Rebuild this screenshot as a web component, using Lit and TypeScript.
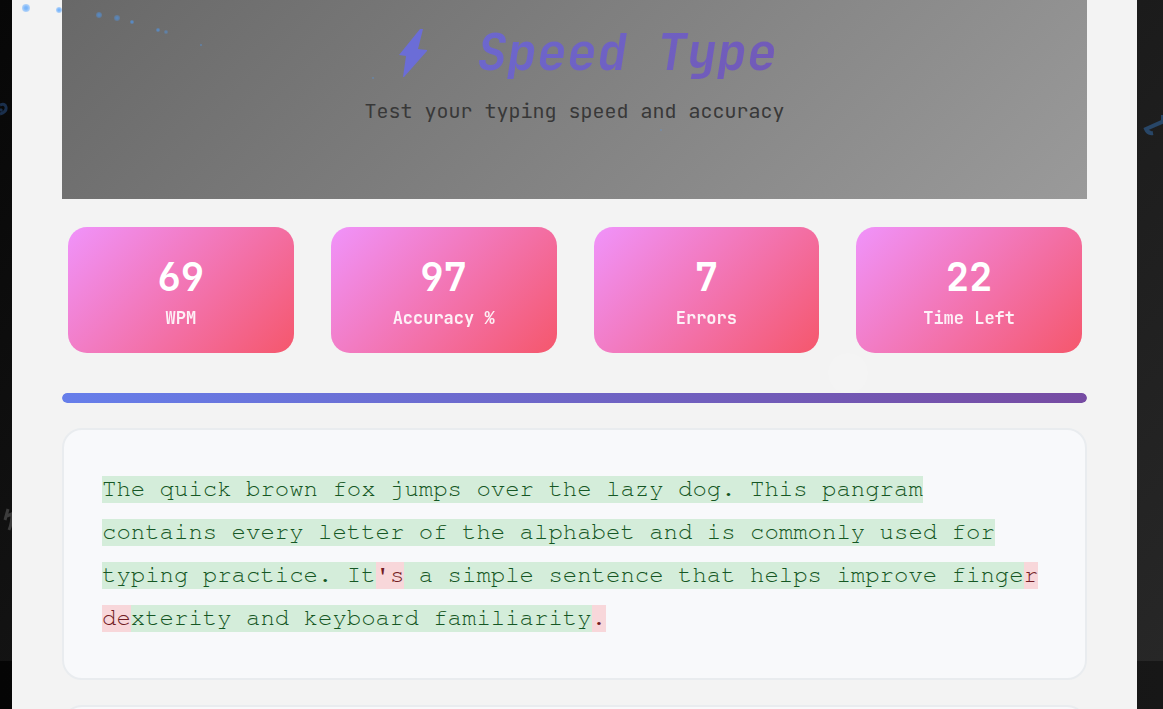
import { LitElement, html, css, svg } from "lit";
import { customElement } from "lit/decorators.js";

const STATS = [
  { value: "69", label: "WPM" },
  { value: "97", label: "Accuracy %" },
  { value: "7", label: "Errors" },
  { value: "22", label: "Time Left" },
];

const RUNS: Array<[boolean, string]> = [
  [true, "The quick brown fox jumps over the lazy dog. This pangram contains every letter of the alphabet and is commonly used for typing practice. It"],
  [false, "'s"],
  [true, " a simple sentence that helps improve finge"],
  [false, "r de"],
  [true, "xterity and keyboard familiarity"],
  [false, "."],
];

// x, y, radius, opacity of the cursor trail
const TRAIL = [
  [26, 8, 4, 0.9], [59, 10, 3, 0.9], [99, 15, 3, 0.7], [117, 18, 3, 0.65],
  [132, 22, 2, 0.75], [158, 30, 2, 0.7], [166, 32, 2, 0.5], [201, 45, 1, 0.7],
  [373, 78, 1, 0.6], [661, 130, 1, 0.5],
];

@customElement("app-root")
export class AppRoot extends LitElement {
  static styles = css`
    :host {
      display: block;
      position: relative;
      height: 100vh;
      overflow: hidden;
      box-sizing: border-box;
      padding: 0 26px 0 12px;
      background:
        linear-gradient(90deg, #050505, #171717) 0 661px / 100% 661px no-repeat,
        linear-gradient(135deg, #070707, #272727) 0 0 / 100% 661px no-repeat;
      font-family: "JetBrains Mono", "DejaVu Sans Mono", monospace;
    }
    .panel {
      position: relative;
      padding: 0 50px;
      background: #f3f3f3;
    }
    .header {
      padding: 22px 0 73px;
      text-align: center;
      background: linear-gradient(135deg, #686868, #9a9a9a);
    }
    .title {
      display: flex;
      justify-content: center;
      align-items: center;
      gap: 25px;
      margin: 0;
      font-size: 50px;
      line-height: 60px;
      font-style: italic;
      font-weight: 700;
    }
    .title-text {
      background: linear-gradient(135deg, #6c68cf, #7259b6);
      background-clip: text;
      -webkit-background-clip: text;
      color: transparent;
    }
    .bolt { width: 80px; height: 50px; }
    .subtitle {
      margin: 14px 0 0;
      font-size: 20px;
      line-height: 30px;
      color: #383838;
    }
    .stats {
      display: grid;
      grid-template-columns: repeat(4, 1fr);
      gap: 37px;
      margin: 0;
      padding: 28px 5px 40px 6px;
    }
    .stat {
      display: flex;
      flex-direction: column-reverse;
      padding: 26px 20px 22px;
      border-radius: 19px;
      text-align: center;
      color: #fff;
      background: linear-gradient(135deg, #f093fb, #f5576c);
    }
    .value { margin: 0; font-size: 39px; line-height: 48px; font-weight: 700; }
    .label { margin-top: 4px; font-size: 17px; line-height: 26px; font-weight: 600; opacity: 0.9; }
    .progress { height: 10px; border-radius: 5px; background: #e9ecef; overflow: hidden; }
    .fill { height: 100%; border-radius: 5px; background: linear-gradient(90deg, #667eea, #764ba2); }
    .passage {
      margin: 25px 0;
      padding: 38px;
      border: 2px solid #e9ecef;
      border-radius: 20px;
      background: #f8f9fb;
      font-family: "FreeMono", "Nimbus Mono PS", "TeX Gyre Cursor", "Cutive Mono", "Courier Prime", "Courier New", "Liberation Mono", monospace;
      font-size: 24px;
      line-height: 43px;
    }
    .ok, .bad { padding: 1px 0 2px; }
    .ok { color: #155724; background: #d4edda; }
    .bad { color: #721c24; background: #f8d7da; }
    .entry {
      display: block;
      box-sizing: border-box;
      width: 100%;
      height: 150px;
      padding: 20px;
      border: 2px solid #e9ecef;
      border-radius: 20px;
      background: #f8f9fb;
      resize: none;
    }
    .decor {
      position: absolute;
      inset: 0;
      width: 100%;
      height: 100%;
      pointer-events: none;
    }
    .edge {
      position: absolute;
      top: 0;
      right: 0;
      width: 26px;
      height: 200px;
      pointer-events: none;
    }
  `;

  render() {
    return html`
      <svg class="decor" aria-hidden="true">
        <path d="M0 105 Q5 103 6 107 Q7 112 0 114 M0 111 L2 109" fill="none" stroke="#1a2f4c" stroke-width="3" />
        <path d="M8 509 L5 520 M7 516 L14 513 M12 514 Q12 523 9 530" fill="none" stroke="#3c3c3c" stroke-width="3" />
      </svg>
      <svg class="edge" aria-hidden="true">
        <path d="M27 121 L9 129 Q11 134 16 133 M26 115 V122" fill="none" stroke="#284667" stroke-width="4" />
      </svg>
      <main class="panel">
        <header class="header">
          <h1 class="title">
            <svg class="bolt" viewBox="372 27 80 50" aria-hidden="true">
              <path d="M420 29 L423 29 L418 49 L427 50 L427 51 L404 77 L403 77 L406 56 L399 55 Z" fill="#6b6dd7" />
            </svg>
            <span class="title-text">Speed Type</span>
          </h1>
          <p class="subtitle">Test your typing speed and accuracy</p>
        </header>
        <dl class="stats">
          ${STATS.map((s) => html`<div class="stat"><dt class="label">${s.label}</dt><dd class="value">${s.value}</dd></div>`)}
        </dl>
        <div class="progress" role="progressbar" aria-valuenow="100" aria-label="Progress"><div class="fill"></div></div>
        <div class="passage">${RUNS.map(([ok, t]) => html`<span class=${ok ? "ok" : "bad"}>${t}</span>`)}</div>
        <textarea class="entry" aria-label="Typing input"></textarea>
      </main>
      <svg class="decor" aria-hidden="true">
        <defs>
          <radialGradient id="dot">
            <stop offset="0.3" stop-color="#4a9eff" />
            <stop offset="1" stop-color="#4a9eff" stop-opacity="0.5" />
          </radialGradient>
        </defs>
        <circle cx="848" cy="373" r="20" fill="#fff" opacity="0.1" />
        ${TRAIL.map(([x, y, r, o]) => svg`<circle cx=${x} cy=${y} r=${r} fill="url(#dot)" opacity=${o * 0.8} />`)}
      </svg>
    `;
  }
}
